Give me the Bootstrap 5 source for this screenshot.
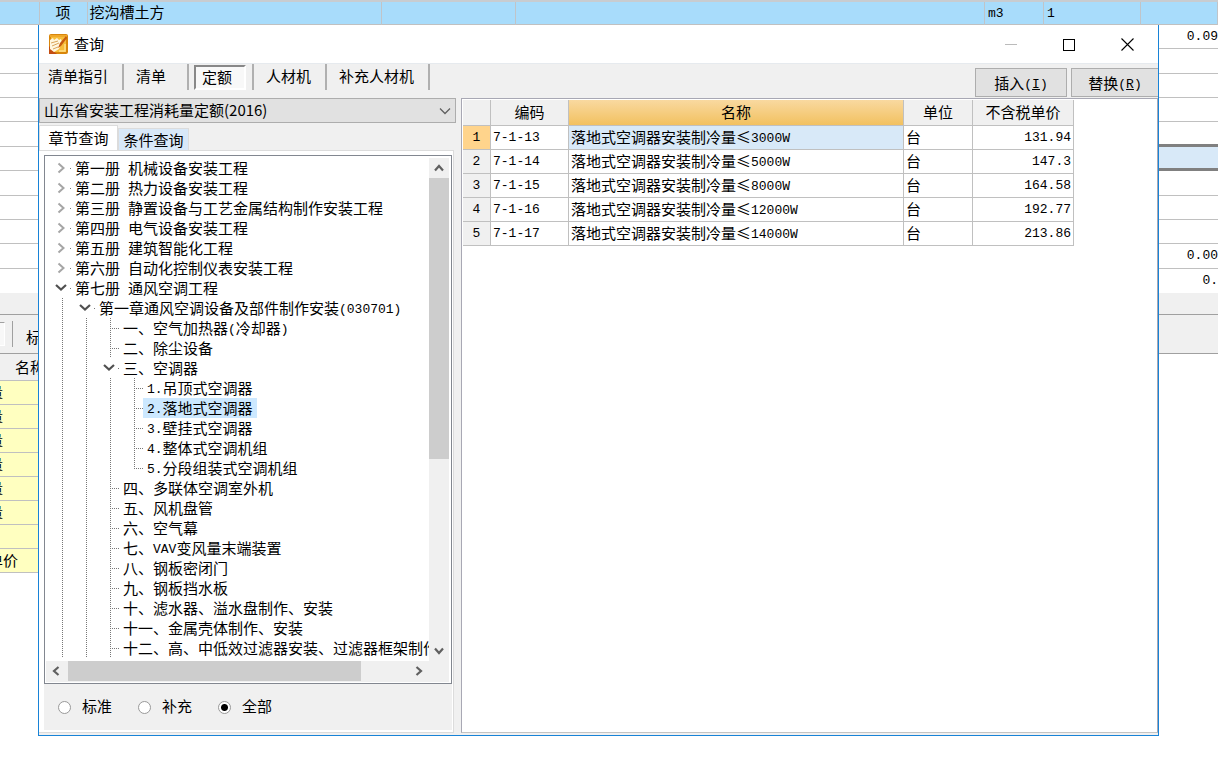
<!DOCTYPE html>
<html lang="zh-CN">
<head>
<meta charset="utf-8">
<meta name="viewport" content="width=device-width, initial-scale=1">
<title>查询</title>
<link href="https://cdn.jsdelivr.net/npm/bootstrap@5.3.0/dist/css/bootstrap.min.css" rel="stylesheet">
<style>
body{font-family:"Noto Sans CJK SC",sans-serif;font-size:15px;line-height:20px;color:#000;background:#fff;overflow-x:hidden}
button,select,input{font:inherit;color:inherit}
.mono{font-family:"Liberation Mono",monospace;font-size:13px}
span.mono{vertical-align:1px;line-height:16px}
/* sheet behind the dialog */
.sheet-top{height:25px;background:#a8dcfb;border-top:2px solid #c8ccd0;border-bottom:1px solid #c0c0c0;table-layout:fixed}
.sheet-top td{padding:0 2px 2px;border-right:1px solid #c0c4c8;height:22px;line-height:20px;white-space:nowrap}
.sheet-top td.mono{padding-left:3px;padding-top:1px;padding-bottom:0}
.desk{display:grid;grid-template-columns:38px minmax(0,1fr) 59px}
.strip{overflow:hidden;white-space:nowrap}
.grid-rows{display:grid;grid-template-rows:repeat(11,1fr);height:268px}
.grid-rows>div{border-bottom:1px solid #c0c0c0;display:flex;align-items:center;justify-content:flex-end}
.grid-rows>div:last-child{border-bottom:0}
.grid-rows .before-current{border-bottom:3px solid #808080}
.grid-rows .current{background:#d8e9f8;border-bottom:3px solid #808080}
.band{height:22px;background:#f0f0f0;border-bottom:1px solid #a0a0a0}
.bar{height:39px;background:#f0f0f0;border-bottom:1px solid #a0a0a0}
.bar>span{flex:none}
.bar .stub{width:5px;height:24px;border-top:1px solid #a0a0a0;border-right:1px solid #fff;border-bottom:1px solid #fff;background:#f8f8f8}
.bar .split{height:26px;border-left:1px solid #a0a0a0;margin-left:7px}
.bar .cap{padding-left:13px;padding-top:6px}
.strip-head{height:27px;line-height:26px;background:#f0f0f0;padding-left:15px;border-bottom:1px solid #c0c0c0}
.yrow{height:24px;line-height:21px;background:#ffffc0;border-bottom:1px solid #c0c0c0;text-indent:-12px}
/* dialog */
.dialog{background:#f0f0f0;border:1px solid #1883d7;border-top:0;display:flex;flex-direction:column;min-width:0;padding-bottom:2px}
.titlebar{height:39px;background:#fff;border-bottom:1px solid #e6eaee}
.titlebar button{width:58px;height:38px;border:0;background:none;padding:0;display:flex;align-items:center;justify-content:center}
.win-ctl{padding-right:2px}
.toolbar{height:34px}
.tool{height:26px;padding:0 14px 2px 12px;border:0;border-right:2px solid #b0b0b0;background:none;white-space:nowrap;text-align:left}
.tool-first{padding-left:9px}
.tool-wide{min-width:65px}
.tool-slot{height:26px;padding:1px 6px 0 5px;border-right:2px solid #b0b0b0}
.tool-on{width:52px;height:25px;padding:0 0 1px 6px;text-align:left;background:#f8f8f8;border:2px solid #fff;border-top-color:#888;border-left-color:#888}
.act{height:29px;width:92px;padding:0;border:1px solid #adadad;background:#e1e1e1;white-space:nowrap}
.act-end{width:87px;border-right:0}
.work{display:grid;grid-template-columns:minmax(280px,422px) minmax(0,1fr)}
.combo{height:25px;width:417px;max-width:100%;padding:0 24px 2px 4px;line-height:21px;border:1px solid #adadad;border-radius:0;appearance:none;
 background:#e1e1e1 url("data:image/svg+xml,%3Csvg xmlns='http://www.w3.org/2000/svg' width='12' height='8'%3E%3Cpath d='M1 1.5 6 6.5 11 1.5' fill='none' stroke='%23606060' stroke-width='1.3'/%3E%3C/svg%3E") no-repeat right 4px center}
.tabs{margin-top:3px;height:24px}
.tabs button{border:1px solid #dcdcdc;border-bottom:0;padding:0;white-space:nowrap}
.tab-on{width:79px;height:25px;background:#fff}
.tab-off{width:71px;height:22px;background:#d8e8f8}
.pane{margin-right:7px;background:#fff;border:1px solid #dcdcdc;border-left:0;padding:4px 1px 2px 5px}
.treebox{border:1px solid #828790;background:#fff;padding:2px 2px 1px 1px;display:grid;grid-template-columns:minmax(0,1fr) 20px;grid-template-rows:auto 21px}
.tree{overflow:hidden;margin:0;padding:0 0 3px 1px;list-style:none}
.tree li{display:flex;height:20px;white-space:nowrap}
.tree i{flex:none;width:24px;height:20px}
.tree svg{flex:none;width:24px;height:20px}
.tree b{font-weight:400;padding:0 4px;height:20px;line-height:19px}
.tree em{font-style:normal;padding-left:8px}
.v,.l{background:repeating-linear-gradient(#777 0 1px,transparent 1px 2px) 15px 0/1px 100% no-repeat}
.l{background:repeating-linear-gradient(#777 0 1px,transparent 1px 2px) 15px 0/1px 100% no-repeat,repeating-linear-gradient(90deg,#777 0 1px,transparent 1px 2px) 15px 10px/9px 1px no-repeat}
.l.end{background-size:1px 10px,9px 1px}
.tree .sel{background:#cce8ff}
.sb{background:#f0f0f0;display:flex}
.sb button{border:0;background:none;padding:0;width:20px;height:20px;flex:none;display:flex;align-items:center;justify-content:center}
.thumb{background:#cdcdcd}
.sb-v .thumb{flex:281 0 0}
.sb-v .rest{flex:182 0 0}
.sb-h .thumb{flex:293 0 0;margin-left:2px}
.sb-h .rest{flex:48 0 0}
.sb-h .thumb{margin-bottom:1px}
.filters{height:46px;background:#f0f0f0;gap:26px;padding-left:14px}
.filters label{padding-left:11px;line-height:18px;padding-bottom:2px}
.filters input{appearance:none;width:13px;height:13px;margin:0;border:1px solid #999;border-radius:50%;background:#fff}
.filters input:checked{background:radial-gradient(#000 0 3px,#fff 4px)}
.results{background:#fff;border:1px solid #a8a8b4;border-bottom-color:#c4c4c4;padding:1px;overflow:hidden}
.quota{width:611px;table-layout:fixed;border-collapse:separate;border-spacing:0;line-height:20px}
.quota th,.quota td{border:solid #c0c0c0;border-width:0 1px 1px 0;padding:0 2px 1px;height:24px;font-weight:400;white-space:nowrap;line-height:20px}
.quota .mono:is(td,th){padding-top:1px;padding-bottom:0}
.quota thead th{height:26px;background:#f0f0f0;text-align:center}
.quota thead .hot{background:linear-gradient(#f9d9a0,#f2c160)}
.quota tbody th{background:#f0f0f0;text-align:center}
.quota tbody th.hot{background:#ffd48c}
.quota td.hot{background:#d8e9f8}
</style>
</head>
<body>
<table class="sheet-top w-100">
<colgroup><col style="width:39px"><col style="width:48px"><col style="width:294px"><col style="width:134px"><col><col style="width:59px"><col style="width:97px"><col style="width:77px"></colgroup>
<tr><td></td><td class="text-center">项</td><td>挖沟槽土方</td><td></td><td></td><td class="mono">m3</td><td class="mono">1</td><td></td></tr>
</table>
<div class="desk">
<aside class="strip">
 <div class="grid-rows"><div></div><div></div><div></div><div></div><div></div><div></div><div></div><div></div><div></div><div></div><div></div></div>
 <div class="band"></div>
 <div class="bar d-flex align-items-center"><span class="stub"></span><span class="split"></span><span class="cap">标准</span></div>
 <div class="strip-head">名称</div>
 <div class="yrow">量</div><div class="yrow">量</div><div class="yrow">量</div><div class="yrow">量</div><div class="yrow">量</div><div class="yrow">量</div><div class="yrow"></div><div class="yrow">单价</div>
</aside>

<main class="dialog">
 <header class="titlebar d-flex align-items-center">
  <svg class="ms-2 me-1" width="23" height="20" viewBox="0 0 23 20" aria-hidden="true">
   <rect x="2" y="0" width="19" height="20" rx="2" fill="#d8860b"/><rect x="4" y="2" width="15" height="16" fill="#f7bd3a"/><path d="M3 1h17v2H3z" fill="#f0a829"/>
   <path d="M2 12v8h8l-4-3z" fill="#c44d12"/>
   <path d="M3 6 6 4l1 2 3-2 2 2 2-1 1 3-3 7-5 3-4-3z" fill="#fff6df"/><path d="M4 9l7-2M5 12l7-3M6 15l5-2" stroke="#d9a45a" stroke-width="1"/>
   <path d="M19 2 13 9l-2 5 3-2 6-8z" fill="#c65a10"/><path d="M18 10v7h-6" fill="none" stroke="#ffe08a" stroke-width="1.5"/>
  </svg>
  <span>查询</span>
  <div class="win-ctl ms-auto d-flex">
   <button aria-label="最小化"><svg width="13" height="13"><path d="M0 6.500h12" stroke="#bbb"/></svg></button>
   <button aria-label="最大化"><svg width="13" height="13"><rect x=".5" y="1.500" width="11" height="11" fill="none" stroke="#000"/></svg></button>
   <button aria-label="关闭"><svg width="13" height="13"><path d="M.5.500l12 12M12.500.500l-12 12" stroke="#000" stroke-width="1.100"/></svg></button>
  </div>
 </header>
 <nav class="toolbar d-flex align-items-start">
  <button class="tool tool-first">清单指引</button><button class="tool tool-wide">清单</button><div class="tool-slot"><button class="tool-on">定额</button></div><button class="tool">人材机</button><button class="tool">补充人材机</button>
  <div class="ms-auto d-flex gap-1 pt-1"><button class="act">插入<span class="mono">(<u>I</u>)</span></button><button class="act act-end">替换<span class="mono">(<u>R</u>)</span></button></div>
 </nav>
 <div class="work flex-grow-1">
  <section class="d-flex flex-column">
   <select class="combo" aria-label="定额库"><option>山东省安装工程消耗量定额(2016)</option></select>
   <div class="tabs d-flex align-items-end"><button class="tab-on">章节查询</button><button class="tab-off">条件查询</button></div>
   <div class="pane flex-grow-1">
    <div class="treebox">
     <ul class="tree" id="tree"></ul>
     <div class="sb sb-v flex-column">
      <button aria-label="向上"><svg width="12" height="10"><path d="M2 7.500 6 3l4 4.500" fill="none" stroke="#606060" stroke-width="2.200"/></svg></button>
      <div class="thumb"></div><div class="rest"></div>
      <button aria-label="向下"><svg width="12" height="10"><path d="M2 2.500 6 7l4-4.500" fill="none" stroke="#606060" stroke-width="2.200"/></svg></button>
     </div>
     <div class="sb sb-h">
      <button aria-label="向左"><svg width="10" height="12"><path d="M7.500 2 3 6l4.500 4" fill="none" stroke="#606060" stroke-width="2.200"/></svg></button>
      <div class="thumb"></div><div class="rest"></div>
      <button aria-label="向右"><svg width="10" height="12"><path d="M2.500 2 7 6l-4.500 4" fill="none" stroke="#606060" stroke-width="2.200"/></svg></button>
     </div>
     <div class="sb"></div>
    </div>
    <div class="filters d-flex align-items-center">
     <div class="d-flex align-items-center"><input type="radio" name="kind" id="k1"><label for="k1">标准</label></div>
     <div class="d-flex align-items-center"><input type="radio" name="kind" id="k2"><label for="k2">补充</label></div>
     <div class="d-flex align-items-center"><input type="radio" name="kind" id="k3" checked><label for="k3">全部</label></div>
    </div>
   </div>
  </section>
  <section class="results">
   <table class="quota">
    <colgroup><col style="width:28px"><col style="width:78px"><col style="width:335px"><col style="width:69px"><col style="width:101px"></colgroup>
    <thead><tr><th></th><th>编码</th><th class="hot">名称</th><th>单位</th><th>不含税单价</th></tr></thead>
    <tbody>
     <tr><th class="mono hot">1</th><td class="mono">7-1-13</td><td class="hot">落地式空调器安装制冷量≤<span class="mono">3000W</span></td><td>台</td><td class="mono text-end">131.94</td></tr>
     <tr><th class="mono">2</th><td class="mono">7-1-14</td><td>落地式空调器安装制冷量≤<span class="mono">5000W</span></td><td>台</td><td class="mono text-end">147.3</td></tr>
     <tr><th class="mono">3</th><td class="mono">7-1-15</td><td>落地式空调器安装制冷量≤<span class="mono">8000W</span></td><td>台</td><td class="mono text-end">164.58</td></tr>
     <tr><th class="mono">4</th><td class="mono">7-1-16</td><td>落地式空调器安装制冷量≤<span class="mono">12000W</span></td><td>台</td><td class="mono text-end">192.77</td></tr>
     <tr><th class="mono">5</th><td class="mono">7-1-17</td><td>落地式空调器安装制冷量≤<span class="mono">14000W</span></td><td>台</td><td class="mono text-end">213.86</td></tr>
    </tbody>
   </table>
  </section>
 </div>
</main>

<aside class="strip">
 <div class="grid-rows mono"><div>0.09</div><div></div><div></div><div></div><div class="before-current"></div><div class="current"></div><div></div><div></div><div></div><div>0.00</div><div>0.</div></div>
 <div class="band"></div>
 <div class="bar"></div>
</aside>
</div>
<script src="https://cdn.jsdelivr.net/npm/bootstrap@5.3.0/dist/js/bootstrap.bundle.min.js"></script>
<script>
// depth, state (c = closed, o = open, l = leaf, e = last leaf, s = selected leaf), label
const nodes = [
 [0,'c','第一册 机械设备安装工程'],[0,'c','第二册 热力设备安装工程'],[0,'c','第三册 静置设备与工艺金属结构制作安装工程'],
 [0,'c','第四册 电气设备安装工程'],[0,'c','第五册 建筑智能化工程'],[0,'c','第六册 自动化控制仪表安装工程'],
 [0,'o','第七册 通风空调工程'],[1,'o','第一章通风空调设备及部件制作安装(030701)'],
 [2,'l','一、空气加热器(冷却器)'],[2,'l','二、除尘设备'],[2,'o','三、空调器'],
 [3,'l','1.吊顶式空调器'],[3,'s','2.落地式空调器'],[3,'l','3.壁挂式空调器'],[3,'l','4.整体式空调机组'],[3,'e','5.分段组装式空调机组'],
 [2,'l','四、多联体空调室外机'],[2,'l','五、风机盘管'],[2,'l','六、空气幕'],[2,'l','七、VAV变风量末端装置'],
 [2,'l','八、钢板密闭门'],[2,'l','九、钢板挡水板'],[2,'l','十、滤水器、溢水盘制作、安装'],
 [2,'l','十一、金属壳体制作、安装'],[2,'l','十二、高、中低效过滤器安装、过滤器框架制作']
];
const closed = '<svg><path d="M11.500 5.500l5 4.500-5 4.500" fill="none" stroke="#a6a6a6" stroke-width="2"/><path d="M23 10.500h1" stroke="#777"/></svg>';
const open = '<svg><path d="M9 7l5 4.500 5-4.500" fill="none" stroke="#505050" stroke-width="2.200"/><path d="M23 10.500h1" stroke="#777"/></svg>';
document.getElementById('tree').innerHTML = nodes.map(([d, s, t]) => {
  const mark = s === 'c' ? closed : s === 'o' ? open : `<i class="l${s === 'e' ? ' end' : ''}"></i>`;
  const [head, tail] = t.split(' ');
  const label = head.replace(/[\x21-\x7e]+/g, m => `<span class="mono">${m}</span>`) + (tail ? `<em>${tail}</em>` : '');
  return `<li>${'<i class="v"></i>'.repeat(d)}${mark}<b${s === 's' ? ' class="sel"' : ''}>${label}</b></li>`;
}).join('');
</script>
</body>
</html>
